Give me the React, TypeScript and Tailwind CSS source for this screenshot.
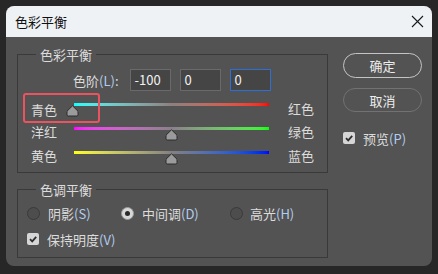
import React from "react";

const FONT = { fontFamily: '"Noto Sans CJK SC", "Noto Sans", sans-serif' };

function Thumb({ left }: { left: number }) {
  return (
    <svg
      width="13"
      height="12"
      viewBox="0 0 13 12"
      className="absolute top-[10px]"
      style={{ left }}
    >
      <path
        d="M6.5 0.8 L12 6.2 V9.8 Q12 11 10.8 11 H2.2 Q1 11 1 9.8 V6.2 Z"
        fill="#9b9b9b"
        stroke="#2c2c2c"
        strokeWidth="1"
      />
    </svg>
  );
}

function SliderRow({
  left,
  right,
  grad,
  thumb,
  labelShift,
}: {
  left: string;
  right: string;
  grad: string;
  thumb: number;
  labelShift?: boolean;
}) {
  return (
    <div className="flex h-[24px] pl-[13px]">
      <div
        className={
          "w-[43px] flex items-center text-[13px] leading-none text-[#dcdcdc] " +
          (labelShift ? "pt-[5px]" : "")
        }
      >
        {left}
      </div>
      <div className="relative w-[195px] h-[24px]">
        <div className={"absolute left-0 right-0 top-[8px] h-[3px] " + grad} />
        <Thumb left={thumb} />
      </div>
      <div
        className={
          "ml-[19px] flex items-center text-[13px] leading-none text-[#dcdcdc] " +
          (labelShift ? "pt-[3px]" : "")
        }
      >
        {right}
      </div>
    </div>
  );
}

function CheckBox() {
  return (
    <div className="w-[12px] h-[12px] rounded-[2px] bg-[#d6d6d6] flex items-center justify-center">
      <svg width="10" height="10" viewBox="0 0 10 10">
        <polyline
          points="2,5.2 4.2,7.4 8.2,2.8"
          fill="none"
          stroke="#2e2e2e"
          strokeWidth="1.8"
        />
      </svg>
    </div>
  );
}

function Radio({ checked }: { checked?: boolean }) {
  if (checked)
    return (
      <div className="w-[13px] h-[13px] rounded-full bg-[#d8d8d8] border border-[#9a9a9a] flex items-center justify-center">
        <div className="w-[5px] h-[5px] rounded-full bg-[#2a2a2a]" />
      </div>
    );
  return (
    <div className="w-[13px] h-[13px] rounded-full border-[1.5px] border-[#3a3a3a] bg-[#4d4d4d]" />
  );
}

const Hot = ({ children }: { children: React.ReactNode }) => (
  <span className="text-[#b3cdef]">{children}</span>
);

export default function App() {
  return (
    <div
      className="relative w-[438px] h-[274px] bg-[#272727] pt-[6px] pl-[6px]"
      style={FONT}
    >
      <div className="w-[426px] h-[260px] rounded-[8px] overflow-hidden flex flex-col bg-[#535353]">
        {/* title bar */}
        <div className="h-[31px] bg-[#eef2f5] flex items-center justify-between pl-[9px] pr-[8px]">
          <span className="text-[13px] leading-none text-[#111]">色彩平衡</span>
          <svg width="13" height="13" viewBox="0 0 13 13">
            <path d="M1 1 L12 12 M12 1 L1 12" stroke="#1a1a1a" strokeWidth="1.1" />
          </svg>
        </div>

        {/* body */}
        <div className="flex-1 flex pl-[11px]">
          {/* left column */}
          <div className="w-[311px] pt-[17px] flex flex-col gap-[16px]">
            {/* group 1 */}
            <div className="relative h-[119px] border border-[#3a3a3a] pt-[14px]">
              <span className="absolute top-[-8px] left-[18px] px-[4px] bg-[#535353] text-[13px] leading-[16px] text-[#dcdcdc]">
                色彩平衡
              </span>
              <div className="flex h-[22px] items-center pl-[55px]">
                <span className="text-[13px] leading-none text-[#dcdcdc]">
                  色阶<Hot>(L)</Hot>:
                </span>
                <div className="ml-[11px] w-[41px] h-[22px] bg-[#454545] border border-[#6a6a6a] flex items-center pl-[4px] text-[13px] text-[#f2f2f2]">
                  -100
                </div>
                <div className="ml-[9px] w-[41px] h-[22px] bg-[#454545] border border-[#6a6a6a] flex items-center pl-[4px] text-[13px] text-[#f2f2f2]">
                  0
                </div>
                <div className="ml-[9px] w-[41px] h-[22px] bg-[#454545] border border-[#2d6fd3] flex items-center pl-[4px] text-[13px] text-[#f2f2f2]">
                  0
                </div>
              </div>
              <div className="mt-[4px] flex flex-col">
                <SliderRow
                  left="青色"
                  right="红色"
                  grad="bg-linear-to-r from-[#00ffff] via-[#8c8080] to-[#ff0000]"
                  thumb={-8}
                  labelShift
                />
                <SliderRow
                  left="洋红"
                  right="绿色"
                  grad="bg-linear-to-r from-[#ff00ff] via-[#8a808a] to-[#00ff00]"
                  thumb={91}
                />
                <SliderRow
                  left="黄色"
                  right="蓝色"
                  grad="bg-linear-to-r from-[#ffff00] via-[#858080] to-[#0000ff]"
                  thumb={91}
                />
              </div>
            </div>

            {/* group 2 */}
            <div className="relative h-[69px] border border-[#3a3a3a] pt-[13px]">
              <span className="absolute top-[-8px] left-[18px] px-[4px] bg-[#535353] text-[13px] leading-[16px] text-[#dcdcdc]">
                色调平衡
              </span>
              <div className="flex h-[20px] items-center pl-[9px] text-[13px] leading-none text-[#dcdcdc]">
                <div className="w-[94px] flex items-center gap-[8px]">
                  <Radio />
                  <span>
                    阴影<Hot>(S)</Hot>
                  </span>
                </div>
                <div className="w-[109px] flex items-center gap-[8px]">
                  <Radio checked />
                  <span>
                    中间调<Hot>(D)</Hot>
                  </span>
                </div>
                <div className="flex items-center gap-[7px]">
                  <Radio />
                  <span>
                    高光<Hot>(H)</Hot>
                  </span>
                </div>
              </div>
              <div className="mt-[6px] flex h-[20px] items-center pl-[9px] gap-[8px] text-[13px] leading-none text-[#dcdcdc]">
                <CheckBox />
                <span>
                  保持明度<Hot>(V)</Hot>
                </span>
              </div>
            </div>
          </div>

          {/* right column */}
          <div className="ml-[15px] pt-[16px] flex flex-col">
            <button className="w-[79px] h-[25px] rounded-full border-[1.5px] border-[#c4c4c4] text-[13px] leading-none text-[#ececec]">
              确定
            </button>
            <button className="mt-[10px] w-[79px] h-[24px] rounded-full border-[1.5px] border-[#727272] text-[13px] leading-none text-[#ececec]">
              取消
            </button>
            <div className="mt-[16px] h-[20px] flex items-center gap-[8px] text-[13px] leading-none text-[#dcdcdc]">
              <CheckBox />
              <span>
                预览<Hot>(P)</Hot>
              </span>
            </div>
          </div>
        </div>
      </div>

      {/* highlight annotation */}
      <div className="absolute left-[23px] top-[93px] w-[77px] h-[30px] border-2 border-[#ea5360] rounded-[3px]" />
    </div>
  );
}
